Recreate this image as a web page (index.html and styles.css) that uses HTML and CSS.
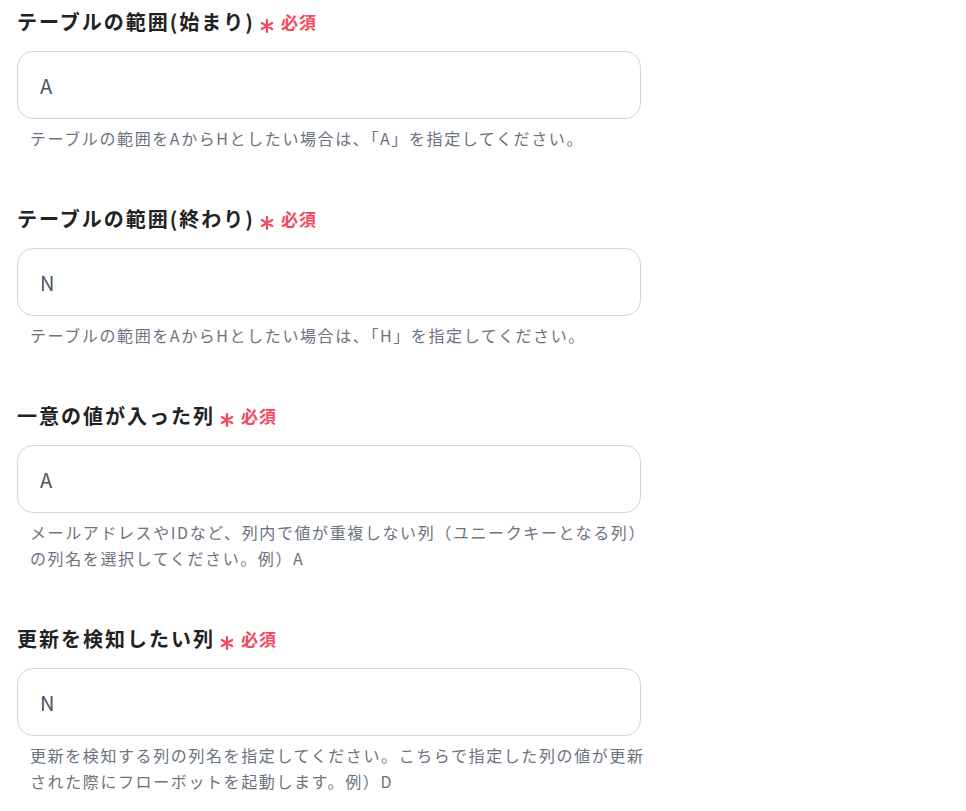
FILE: index.html
```html
<!DOCTYPE html>
<html lang="ja">
<head>
    <meta charset="UTF-8">
    <meta name="viewport" content="width=device-width, initial-scale=1.0">
    <title>フロー設定</title>
    <link rel="stylesheet" href="styles.css">
</head>
<body>

    <div class="form">
        <!-- テーブルの範囲(始まり) -->
        <div class="field">
            <label class="field-label" for="rangeStart">テーブルの範囲(始まり)
                <span class="required">
                    <svg class="mark" viewBox="0 0 16 16"><path d="M8 2v12M2.8 5l10.4 6M2.8 11l10.4-6"/></svg>必須
                </span>
            </label>
            <input class="field-input" type="text" id="rangeStart" value="A">
            <p class="hint">テーブルの範囲をAからHとしたい場合は、「A」を指定してください。</p>
        </div>

        <!-- テーブルの範囲(終わり) -->
        <div class="field">
            <label class="field-label" for="rangeEnd">テーブルの範囲(終わり)
                <span class="required">
                    <svg class="mark" viewBox="0 0 16 16"><path d="M8 2v12M2.8 5l10.4 6M2.8 11l10.4-6"/></svg>必須
                </span>
            </label>
            <input class="field-input" type="text" id="rangeEnd" value="N">
            <p class="hint">テーブルの範囲をAからHとしたい場合は、「H」を指定してください。</p>
        </div>

        <!-- 一意の値が入った列 -->
        <div class="field">
            <label class="field-label" for="uniqueCol">一意の値が入った列
                <span class="required">
                    <svg class="mark" viewBox="0 0 16 16"><path d="M8 2v12M2.8 5l10.4 6M2.8 11l10.4-6"/></svg>必須
                </span>
            </label>
            <input class="field-input" type="text" id="uniqueCol" value="A">
            <p class="hint">メールアドレスやIDなど、列内で値が重複しない列（ユニークキーとなる列）<br>の列名を選択してください。例）A</p>
        </div>

        <!-- 更新を検知したい列 -->
        <div class="field">
            <label class="field-label" for="watchCol">更新を検知したい列
                <span class="required">
                    <svg class="mark" viewBox="0 0 16 16"><path d="M8 2v12M2.8 5l10.4 6M2.8 11l10.4-6"/></svg>必須
                </span>
            </label>
            <input class="field-input" type="text" id="watchCol" value="N">
            <p class="hint">更新を検知する列の列名を指定してください。こちらで指定した列の値が更新<br>された際にフローボットを起動します。例）D</p>
        </div>
    </div>

</body>
</html>
```

FILE: styles.css
```css
body {
    margin: 0;
    padding: 0;
    background-color: #ffffff;
    font-family: "Noto Sans CJK JP", "Noto Sans", sans-serif;
    color: #222222;
}

.form {
    width: 624px;
    padding: 9px 0 0 17px;
}

.field {
    margin-bottom: 55px;
}

.field-label {
    display: flex;
    align-items: center;
    font-size: 20px;
    font-weight: bold;
    line-height: 26px;
    letter-spacing: 0.1em;
    color: #222222;
}

.required {
    display: inline-flex;
    align-items: center;
    margin-left: 4px;
    font-size: 17px;
    color: #f4485e;
    letter-spacing: 0.06em;
}

.required .mark {
    width: 16px;
    height: 16px;
    margin: 8px 6px 0 0;
    fill: none;
    stroke: #f4485e;
    stroke-width: 2.2;
    stroke-linecap: round;
}

.field-input {
    display: block;
    box-sizing: border-box;
    width: 100%;
    height: 68px;
    margin-top: 16px;
    padding: 0 22px;
    border: 1px solid #d1d5db;
    border-radius: 16px;
    font-family: "Noto Sans CJK JP", "Noto Sans", sans-serif;
    font-size: 20px;
    color: #4b5563;
    background-color: #ffffff;
    outline: none;
}

.hint {
    margin: 6px 0 0;
    padding-left: 13px;
    font-size: 16px;
    line-height: 26px;
    letter-spacing: 0.1em;
    white-space: nowrap;
    color: #6b7280;
}
```
